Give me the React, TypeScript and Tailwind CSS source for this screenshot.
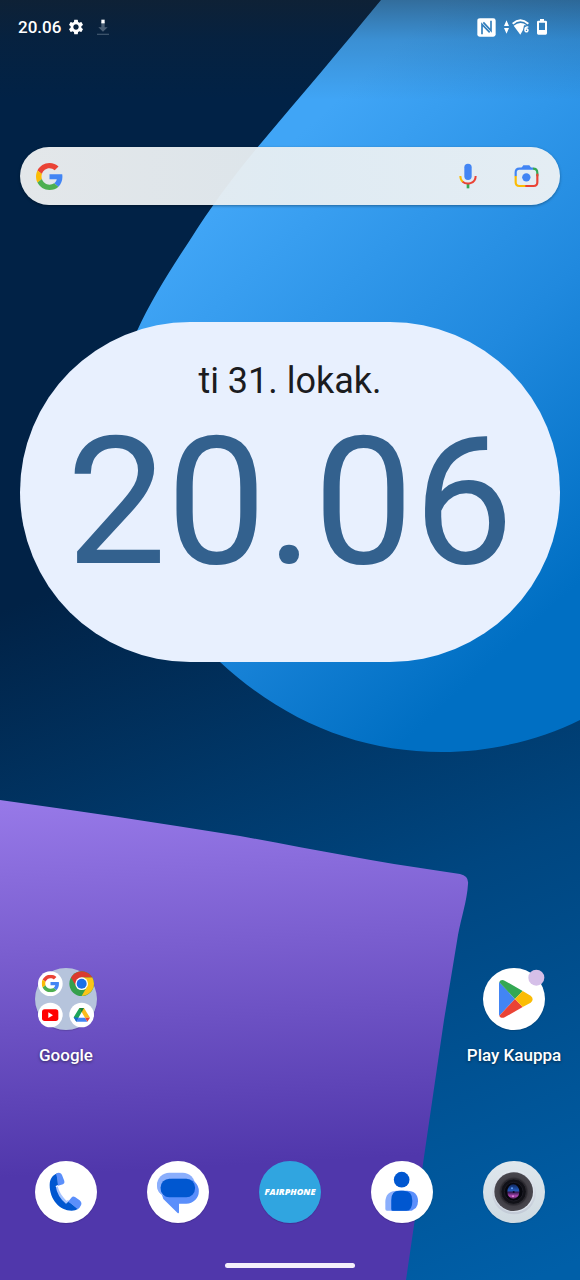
import type { ReactNode } from "react";
import { MdSettings } from "react-icons/md";

function Wallpaper() {
  return (
    <svg
      className="absolute inset-0 -z-10 h-full w-full"
      viewBox="0 0 580 1280"
      preserveAspectRatio="xMidYMid slice"
      aria-hidden="true"
    >
      <defs>
        <linearGradient id="night" gradientUnits="userSpaceOnUse" x1="130" y1="560" x2="430" y2="1320">
          <stop offset="0" stopColor="#012246" />
          <stop offset="0.5" stopColor="#004680" />
          <stop offset="1" stopColor="#005fa8" />
        </linearGradient>
        <linearGradient id="sky" gradientUnits="userSpaceOnUse" x1="210" y1="215" x2="560" y2="600">
          <stop offset="0" stopColor="#40a5f6" />
          <stop offset="0.55" stopColor="#2089de" />
          <stop offset="1" stopColor="#006fc3" />
        </linearGradient>
        <linearGradient id="violet" gradientUnits="userSpaceOnUse" x1="30" y1="800" x2="50" y2="1175">
          <stop offset="0" stopColor="#9779e8" />
          <stop offset="1" stopColor="#5037ab" />
        </linearGradient>
        <linearGradient id="scrim" x1="0" y1="0" x2="0" y2="1">
          <stop offset="0" stopColor="#202020" stopOpacity="0.42" />
          <stop offset="0.4" stopColor="#202020" stopOpacity="0.16" />
          <stop offset="1" stopColor="#202020" stopOpacity="0" />
        </linearGradient>
      </defs>
      <rect width="580" height="1280" fill="url(#night)" />
      <path
        d="M381 0C340 50 300 97 262 142C235 174 212 205 190 240C170 270 150 302 137 331C110 390 100 450 115 510C130 570 165 620 220 662C285 722 360 752 442 752C490 752 540 740 580 720V0Z"
        fill="url(#sky)"
      />
      <path
        d="M0 800C80 811 160 823 240 836C305 848 375 862 440 871L460 874Q469 876 468 884C467 901 461 918 458 935L444 1020L406 1280H0Z"
        fill="url(#violet)"
      />
      <rect width="580" height="100" fill="url(#scrim)" />
    </svg>
  );
}

function GooglePaths() {
  return (
    <>
      <path fill="#ea4335" d="M24 9.5c3.54 0 6.71 1.22 9.21 3.6l6.85-6.85C35.9 2.38 30.47 0 24 0 14.62 0 6.51 5.38 2.56 13.22l7.98 6.19C12.43 13.72 17.74 9.5 24 9.5z" />
      <path fill="#4285f4" d="M46.98 24.55c0-1.57-.15-3.09-.38-4.55H24v9.02h12.94c-.58 2.96-2.26 5.48-4.78 7.18l7.73 6c4.51-4.18 7.09-10.36 7.09-17.65z" />
      <path fill="#fbbc05" d="M10.53 28.59c-.48-1.45-.76-2.99-.76-4.59s.27-3.14.76-4.59l-7.98-6.19C.92 16.46 0 20.12 0 24c0 3.88.92 7.54 2.56 10.78l7.97-6.19z" />
      <path fill="#4caf50" d="M24 48c6.48 0 11.93-2.13 15.89-5.81l-7.73-6c-2.15 1.45-4.92 2.3-8.16 2.3-6.26 0-11.57-4.22-13.47-9.91l-7.98 6.19C6.51 42.62 14.62 48 24 48z" />
    </>
  );
}

function StatusBar() {
  return (
    <header className="flex h-[54px] items-center justify-between pr-[33px] pl-[18px] text-white">
      <div className="flex items-center gap-[6px]">
        <time className="text-[17px] leading-5 font-medium">20.06</time>
        <MdSettings className="size-[18px]" aria-label="Asetukset" />
        <svg className="ml-[6px] h-[18px] w-3" viewBox="0 0 36 54" aria-hidden="true">
          <path d="M13 12h10v16h9L18 41 4 28h9z" fill="#4c6076" />
          <path d="M0 47h36v4H0z" fill="#3b526a" />
          <path d="M13 5h10v11H13z" fill="#fff" />
        </svg>
      </div>
      <div className="flex items-center gap-2">
        <svg className="size-[19px]" viewBox="0 0 57 57" fill="none" aria-hidden="true">
          <path d="M9 1h40q7 0 7 7v41q0 7-7 7H9q-8 0-8-7V8q0-7 8-7z" fill="#fff" />
          <path d="M15 49V19L38 43" stroke="#337fbd" strokeWidth="5" />
          <path d="M42 8V38L19 13" stroke="#337fbd" strokeWidth="5" />
        </svg>
        <div className="flex items-center gap-[3px]">
          <svg className="h-[14px] w-[5px]" viewBox="0 0 15 42" fill="#fff" aria-hidden="true">
            <path d="M7.5 1L15 18H0zM7.5 41L15 24H0z" />
          </svg>
          <svg className="h-4 w-[17px]" viewBox="0 0 51 48" aria-hidden="true">
            <path d="M2 14Q25-6 49 14" fill="none" stroke="#fff" strokeWidth="6" />
            <path d="M5 20Q25 5 44 19H36L33 33L25 47Z" fill="#fff" />
            <path d="M49 24H45Q39 25 39 32V35a4.500 4.500 0 1 0 0-2" fill="none" stroke="#fff" strokeWidth="4.500" />
          </svg>
        </div>
        <svg className="h-4 w-[10px]" viewBox="0 0 30 48" aria-hidden="true">
          <path fillRule="evenodd" d="M9 0h12v5h5q4 0 4 4v34q0 4-4 4H4q-4 0-4-4V9q0-4 4-4h5zM6 11v22h18V11z" fill="#fff" />
        </svg>
      </div>
    </header>
  );
}

function SearchBar() {
  return (
    <form
      role="search"
      onSubmit={(event) => event.preventDefault()}
      className="flex h-[58px] items-center rounded-full bg-linear-to-r from-[#e8ebed]/98 via-[#e8eff3]/95 to-[#e8eff4]/98 pr-5 pl-4 shadow-[0_1px_3px_rgba(0,0,0,0.35)]"
    >
      <svg className="size-[27px] shrink-0" viewBox="0 0 48 48" aria-hidden="true">
        <GooglePaths />
      </svg>
      <input type="search" aria-label="Google-haku" className="h-full min-w-0 flex-1 bg-transparent px-3 text-lg text-[#1f1f1f] outline-none" />
      <button type="button" aria-label="Puhehaku" className="flex size-7 items-center justify-center">
        <svg className="h-[26px] w-[18px]" viewBox="0 0 54 78" fill="none">
          <rect x="16" y="2" width="22" height="49" rx="11" fill="#4285f4" />
          <path d="M27 61V76" stroke="#34a853" strokeWidth="8" />
          <path d="M4 39C4 48 7 53 12 57" stroke="#fbbc04" strokeWidth="6" />
          <path d="M11 56C22 66 50 63 50 39" stroke="#ea4335" strokeWidth="6" />
        </svg>
      </button>
      <button type="button" aria-label="Google Lens" className="ml-[30px] flex size-7 items-center justify-center">
        <svg className="h-6 w-[25px]" viewBox="0 0 75 72" fill="none">
          <path d="M5 37V25Q5 14 16 14H58" stroke="#4285f4" strokeWidth="6.5" />
          <path d="M20 15L28 4H46L54 15Z" fill="#4285f4" />
          <path d="M57 14Q70 14 70 27V37" stroke="#34a853" strokeWidth="6.5" />
          <path d="M70 29V55Q70 66 59 66H32" stroke="#ea4335" strokeWidth="6.5" />
          <path d="M5 36V55Q5 66 16 66H34" stroke="#fbbc04" strokeWidth="6.5" />
          <circle cx="37" cy="40" r="12.5" fill="#4285f4" />
        </svg>
      </button>
    </form>
  );
}

function ClockWidget() {
  return (
    <section aria-label="Kello" className="mt-[117px] flex h-[340px] flex-col items-center rounded-full bg-[#e8f0fe] pt-[38px]">
      <p className="text-[36px] leading-[42px] text-[#1b1c1f]">ti 31. lokak.</p>
      <time className="mt-[10px] text-[178px] leading-[180px] text-[#33618e]">20.06</time>
    </section>
  );
}

function GoogleFolderIcon() {
  return (
    <svg className="size-full" viewBox="45 54 186 186">
      <circle cx="138" cy="147" r="93" fill="#b6c4dc" />
      <circle cx="91" cy="101" r="37" fill="#fff" />
      <svg x="65" y="74" width="53" height="53" viewBox="0 0 48 48">
        <GooglePaths />
      </svg>
      <circle cx="185" cy="101" r="37" fill="#34a04c" />
      <path d="M153 82.500A37 37 0 0 1 217 82.500H185L169 110Z" fill="#db3b2e" />
      <path d="M217 82.500A37 37 0 0 1 185 138L201 110L185 82.500Z" fill="#fcc418" />
      <circle cx="185" cy="101" r="19" fill="#fff" />
      <circle cx="185" cy="101" r="15" fill="#1a6fe8" />
      <circle cx="91" cy="195" r="37" fill="#fff" />
      <rect x="66" y="178" width="49" height="35" rx="8" fill="#f00" />
      <path d="M85 187L99 195.500L85 204Z" fill="#fff" />
      <circle cx="185" cy="195" r="37" fill="#fff" />
      <path d="M178 174H192L185 186L169 215L161 202Z" fill="#1ea55a" />
      <path d="M178 174H192L210 203H195Z" fill="#fcbd1b" />
      <path d="M178 174H192L185 187Z" fill="#188038" />
      <path d="M176 203H195L202 215H169Z" fill="#4285f4" />
      <path d="M195 203H210L202 215Z" fill="#ea4335" />
      <path d="M161 202L169 215L176 203Z" fill="#1967d2" />
    </svg>
  );
}

function PlayIcon() {
  return (
    <svg className="size-full overflow-visible" viewBox="67 55 186 186">
      <circle cx="160" cy="148" r="93" fill="#fff" />
      <path d="M116 97Q115 99 115 102V193Q115 196 116 198L163 148Z" fill="#4285f4" />
      <path d="M116 98C118 90 126 89 132 93L186 124L163 148Z" fill="#34a853" />
      <path d="M116 198C118 205 126 206 132 203L186 172L163 148Z" fill="#ea4335" />
      <path d="M186 124L210 138Q222 148 210 159L186 172L163 148Z" fill="#fbbc04" />
      <circle cx="227" cy="84" r="24" fill="#d5bfe8" />
    </svg>
  );
}

function PhoneIcon() {
  return (
    <svg className="size-full" viewBox="45 34 186 186">
      <circle cx="138" cy="127" r="93" fill="#fff" />
      <path d="M105 114L113 110Q119 134 139 153L147 150L138 163Q112 146 105 114Z" fill="#a6c3ff" />
      <path d="M112 71C98 76 89 88 89 106C89 150 119 183 155 183Q166 183 174 178L146 155L138 162Q112 142 107 109L114 106Z" fill="#0057d0" />
      <path d="M108 73Q114 67 120 70Q124 71 126 76L133 94Q135 101 129 104L114 108Q115 90 108 73Z" fill="#5b8ffb" />
      <path d="M144 156L154 144Q159 138 165 142L179 152Q187 159 183 167Q179 176 173 179Q160 165 144 156Z" fill="#5b8ffb" />
    </svg>
  );
}

function MessagesIcon() {
  return (
    <svg className="size-full" viewBox="381 34 186 186">
      <circle cx="474" cy="127" r="93" fill="#fff" />
      <rect x="411" y="69" width="114" height="74" rx="37" fill="#8aaefc" />
      <path d="M459 87H499A37 37 0 0 1 499 162H477V187Q477 193 472 189L430 148L422 124A37 37 0 0 1 459 87Z" fill="#5b8ffb" />
      <path d="M411 106A37 37 0 0 0 433 140L422 124Q422 100 440 92L430 80A37 37 0 0 0 411 106Z" fill="#8aaefc" />
      <rect x="422" y="87" width="103" height="56" rx="26" fill="#0057d0" />
    </svg>
  );
}

function FairphoneIcon() {
  return (
    <span className="flex size-full items-center justify-center rounded-full bg-[#30a5e0] font-['Open_Sans',sans-serif] text-[9px] leading-3 font-extrabold text-white italic">
      FAIRPHONE
    </span>
  );
}

function ContactsIcon() {
  return (
    <svg className="size-full" viewBox="392 34 186 186">
      <circle cx="485" cy="127" r="93" fill="#fff" />
      <circle cx="484" cy="90" r="23.500" fill="#0057d0" />
      <path d="M471 123H485Q516 123 516 153V183H440Q435 183 435 178V158Q435 123 471 123Z" fill="#8aaefc" />
      <path d="M482 123H500Q533 123 533 155Q533 183 505 183H453V153Q453 123 482 123Z" fill="#5b8ffb" />
      <path d="M477 123H490Q516 123 516 153Q516 183 498 183H457Q453 183 453 178V150Q453 123 477 123Z" fill="#0057d0" />
    </svg>
  );
}

function CameraIcon() {
  return (
    <svg className="size-full" viewBox="98 64 186 186">
      <defs>
        <linearGradient id="shell" x1="0" y1="0" x2="0" y2="1">
          <stop offset="0" stopColor="#dfe7ed" />
          <stop offset="1" stopColor="#cfdae1" />
        </linearGradient>
        <linearGradient id="rim" x1="0" y1="0" x2="0" y2="1">
          <stop offset="0" stopColor="#e3e9f0" />
          <stop offset="1" stopColor="#c2cad6" />
        </linearGradient>
        <radialGradient id="barrel">
          <stop offset="0.5" stopColor="#08080c" />
          <stop offset="0.68" stopColor="#2c2a30" />
          <stop offset="0.76" stopColor="#413f46" />
          <stop offset="1" stopColor="#4a484f" />
        </radialGradient>
        <linearGradient id="glass" x1="0" y1="0" x2="0" y2="1">
          <stop offset="0" stopColor="#10275e" />
          <stop offset="0.42" stopColor="#2359b8" />
          <stop offset="0.55" stopColor="#3a1b58" />
          <stop offset="0.8" stopColor="#b048b4" />
          <stop offset="1" stopColor="#3c1646" />
        </linearGradient>
      </defs>
      <circle cx="191" cy="157" r="93" fill="url(#shell)" />
      <circle cx="191" cy="158" r="66" fill="url(#rim)" />
      <circle cx="191" cy="156" r="61" fill="#dce3ec" />
      <circle cx="190" cy="156" r="58" fill="url(#barrel)" />
      <circle cx="190" cy="156" r="38" fill="#111117" stroke="#343239" strokeWidth="2" />
      <circle cx="190" cy="156" r="28" fill="#06070d" stroke="#24232d" strokeWidth="2" />
      <ellipse cx="189" cy="156" rx="18" ry="22" fill="url(#glass)" />
      <circle cx="190" cy="157" r="3" fill="#0d0b24" />
      <circle cx="185" cy="146" r="3" fill="#5f9cf4" />
      <circle cx="188" cy="170" r="3" fill="#e086dc" />
    </svg>
  );
}

type AppProps = { name: string; icon: ReactNode; labelled?: boolean };

function AppButton({ name, icon, labelled = false }: AppProps) {
  return (
    <button type="button" aria-label={name} className="flex flex-col items-center gap-[13px]">
      <span className="block size-[62px] rounded-full shadow-[0_1px_1px_rgba(0,0,0,0.15)]">{icon}</span>
      {labelled && (
        <span className="text-[17px] leading-6 font-medium whitespace-nowrap text-white [text-shadow:0_1px_3px_rgba(0,0,0,0.5)]">
          {name}
        </span>
      )}
    </button>
  );
}

const dockApps: AppProps[] = [
  { name: "Puhelin", icon: <PhoneIcon /> },
  { name: "Viestit", icon: <MessagesIcon /> },
  { name: "Fairphone", icon: <FairphoneIcon /> },
  { name: "Yhteystiedot", icon: <ContactsIcon /> },
  { name: "Kamera", icon: <CameraIcon /> },
];

export default function App() {
  return (
    <div className="relative isolate flex min-h-screen flex-col overflow-hidden bg-[#012246] font-['Roboto',sans-serif]">
      <Wallpaper />
      <StatusBar />
      <main className="flex flex-1 flex-col pt-[93px]">
        <div className="px-5">
          <SearchBar />
          <ClockWidget />
        </div>
        <div className="mt-auto grid grid-cols-5 px-[10px] pt-12">
          <AppButton name="Google" icon={<GoogleFolderIcon />} labelled />
          <div className="col-start-5 flex justify-center">
            <AppButton name="Play Kauppa" icon={<PlayIcon />} labelled />
          </div>
        </div>
        <nav aria-label="Suosikit" className="mt-[94px] grid grid-cols-5 px-[10px]">
          {dockApps.map((app) => (
            <AppButton key={app.name} {...app} />
          ))}
        </nav>
      </main>
      <footer className="flex justify-center pt-10 pb-3">
        <div className="h-[5px] w-[130px] rounded-full bg-[#f4effb]" />
      </footer>
    </div>
  );
}
